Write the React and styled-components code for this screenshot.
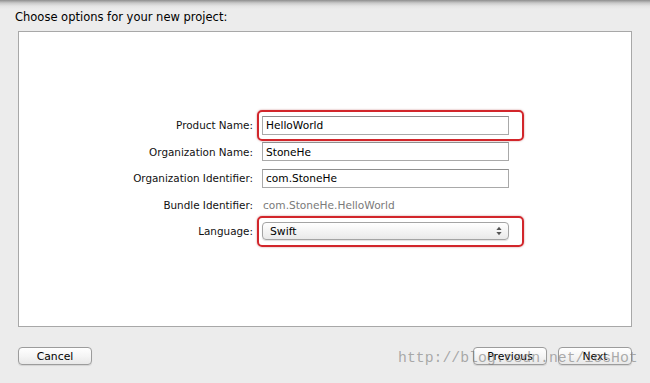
import React from "react";
import styled, { createGlobalStyle } from "styled-components";

const GlobalStyle = createGlobalStyle`
  html, body {
    margin: 0;
    padding: 0;
    background: #ececec;
  }
`;

const Window = styled.div`
  position: relative;
  width: 650px;
  height: 383px;
  overflow: hidden;
  display: flex;
  flex-direction: column;
  background: linear-gradient(#8e8e8e 0px, #c9c9c9 3px, #e4e4e4 6px, #ececec 9px);
  font-family: "DejaVu Sans", "Lucida Grande", sans-serif;
  color: #000;
`;

const Title = styled.div`
  height: 31px;
  box-sizing: border-box;
  padding: 4px 0 0 15px;
  font-size: 11.5px;
  line-height: 1;
  display: flex;
  align-items: center;
`;

const Panel = styled.section`
  margin: 0 18px;
  height: 296px;
  box-sizing: border-box;
  background: #fff;
  border: 1px solid #a8a8a8;
  display: flex;
  align-items: center;
`;

const Form = styled.div`
  display: grid;
  grid-template-columns: 234px 247px;
  grid-auto-rows: 19px;
  column-gap: 9px;
  row-gap: 7.5px;
  margin-top: -2px;
`;

const Label = styled.label`
  font-size: 10.4px;
  color: #111;
  display: flex;
  align-items: center;
  justify-content: flex-end;
`;

const Field = styled.div`
  position: relative;
  display: flex;
  align-items: center;

  ${({ $highlight }) =>
    $highlight &&
    `
    &::after {
      content: "";
      position: absolute;
      left: -5px;
      right: -15px;
      top: -6px;
      bottom: -6px;
      border: 2.5px solid #d2262b;
      border-radius: 5px;
      box-shadow: 0 0 2px rgba(150, 20, 20, 0.5);
      pointer-events: none;
    }
  `}
`;

const TextInput = styled.div`
  width: 100%;
  height: 19px;
  box-sizing: border-box;
  border: 1px solid #a9a9a9;
  border-top-color: #8f8f8f;
  background: #fff;
  font-size: 10.6px;
  color: #000;
  padding-left: 3px;
  display: flex;
  align-items: center;
`;

const StaticValue = styled.div`
  font-size: 10.6px;
  color: #7a7a7a;
  padding-left: 1px;
`;

const Select = styled.div`
  width: 100%;
  height: 18px;
  box-sizing: border-box;
  border: 1px solid #a4a4a4;
  border-radius: 4px;
  background: linear-gradient(#ffffff, #f4f4f4 50%, #e9e9e9);
  box-shadow: 0 1px 1px rgba(0, 0, 0, 0.12);
  font-size: 10.8px;
  color: #000;
  padding: 0 6px 0 7px;
  display: flex;
  align-items: center;
  justify-content: space-between;
`;

const Footer = styled.div`
  flex: 1;
  display: flex;
  align-items: flex-start;
  justify-content: space-between;
  padding: 20px 18px 0 18px;
`;

const ButtonGroup = styled.div`
  display: flex;
  gap: 11px;
`;

const Button = styled.button`
  width: 74px;
  height: 18px;
  box-sizing: border-box;
  border: 1px solid #9c9c9c;
  border-radius: 4px;
  background: linear-gradient(#ffffff, #f5f5f5 50%, #e8e8e8);
  box-shadow: 0 1px 1px rgba(0, 0, 0, 0.1);
  font-family: "DejaVu Sans", "Lucida Grande", sans-serif;
  font-size: 10.8px;
  color: #000;
  padding: 0;
  display: flex;
  align-items: center;
  justify-content: center;
`;

const Watermark = styled.div`
  position: absolute;
  left: 398px;
  top: 351px;
  font-family: "Liberation Mono", "Courier New", monospace;
  font-size: 14.8px;
  line-height: 1;
  color: rgba(120, 120, 120, 0.6);
  white-space: nowrap;
  pointer-events: none;
`;

function Stepper() {
  return (
    <svg width="6" height="10" viewBox="0 0 6 10">
      <path d="M3 0.8 L5.6 4 H0.4 Z" fill="#555" />
      <path d="M3 9.2 L5.6 6 H0.4 Z" fill="#555" />
    </svg>
  );
}

const rows = [
  { label: "Product Name:", value: "HelloWorld", kind: "input", highlight: true },
  { label: "Organization Name:", value: "StoneHe", kind: "input" },
  { label: "Organization Identifier:", value: "com.StoneHe", kind: "input" },
  { label: "Bundle Identifier:", value: "com.StoneHe.HelloWorld", kind: "static" },
  { label: "Language:", value: "Swift", kind: "select", highlight: true },
];

export default function App() {
  return (
    <>
      <GlobalStyle />
      <Window>
        <Title>Choose options for your new project:</Title>
        <Panel>
          <Form>
            {rows.map((r) => (
              <React.Fragment key={r.label}>
                <Label>{r.label}</Label>
                <Field $highlight={r.highlight}>
                  {r.kind === "input" && <TextInput>{r.value}</TextInput>}
                  {r.kind === "static" && <StaticValue>{r.value}</StaticValue>}
                  {r.kind === "select" && (
                    <Select>
                      <span>{r.value}</span>
                      <Stepper />
                    </Select>
                  )}
                </Field>
              </React.Fragment>
            ))}
          </Form>
        </Panel>
        <Footer>
          <Button>Cancel</Button>
          <ButtonGroup>
            <Button>Previous</Button>
            <Button>Next</Button>
          </ButtonGroup>
        </Footer>
        <Watermark>http://blog.csdn.net/iosHot</Watermark>
      </Window>
    </>
  );
}
